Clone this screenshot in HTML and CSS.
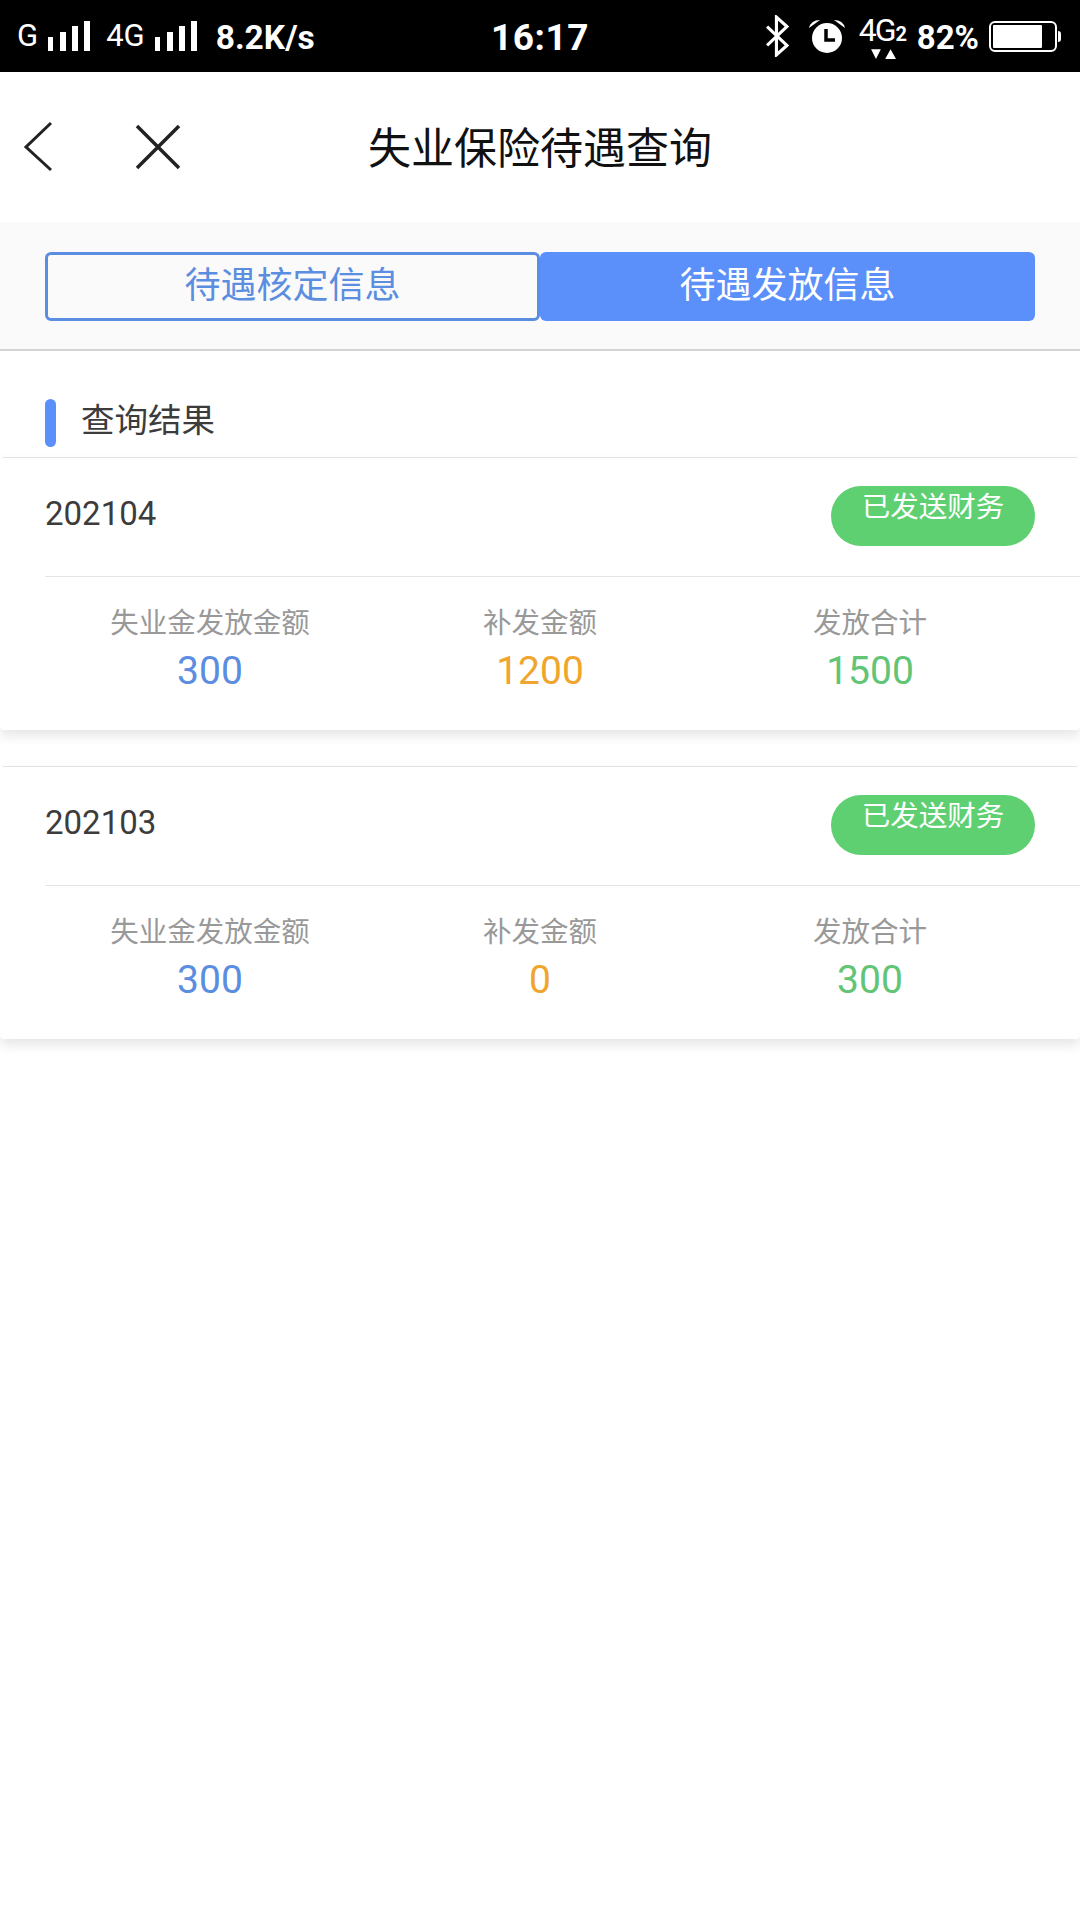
FILE: index.html
```html
<!DOCTYPE html>
<html lang="zh-CN">
<head>
    <meta charset="UTF-8">
    <meta name="viewport" content="width=device-width, initial-scale=1.0">
    <title>失业保险待遇查询</title>
    <link rel="stylesheet" href="styles.css">
</head>
<body>

<div class="status-bar">
    <div class="status-left">
        <span class="net">G</span>
        <svg class="signal" width="42" height="32" viewBox="0 0 42 32" fill="#fff"><rect x="0" y="16" width="5" height="14"/><rect x="12" y="11" width="6" height="19"/><rect x="24" y="5" width="6" height="25"/><rect x="36" y="0" width="6" height="30"/></svg>
        <span class="net net-4g">4G</span>
        <svg class="signal" width="42" height="32" viewBox="0 0 42 32" fill="#fff"><rect x="0" y="16" width="5" height="14"/><rect x="12" y="11" width="6" height="19"/><rect x="24" y="5" width="6" height="25"/><rect x="36" y="0" width="6" height="30"/></svg>
        <span class="speed">8.2K/s</span>
    </div>
    <div class="status-time">16:17</div>
    <div class="status-right">
        <svg class="bt" width="23" height="42" viewBox="0 0 22 40" fill="none" stroke="#fff" stroke-width="3"><path d="M1 11 L20 29 L10 38 V2 L20 11 L1 29"/></svg>
        <svg class="alarm" width="36" height="36" viewBox="0 0 36 36"><circle cx="18" cy="20" r="15" fill="#fff"/><path d="M0 10 Q2 2 11 2 Z M36 10 Q34 2 25 2 Z" fill="#fff"/><path d="M17 11 V22 H26" fill="none" stroke="#000" stroke-width="3.500"/></svg>
        <div class="net-two">
            <span class="big">4G</span><span class="sim">2</span>
            <svg class="arrows" width="26" height="12" viewBox="0 0 24 11" fill="#fff"><path d="M1 1 H10 L5.500 10 Z M14 10 H24 L19 1 Z"/></svg>
        </div>
        <span class="percent">82%</span>
        <div class="battery"><div class="battery-level"></div></div>
        <div class="battery-tip"></div>
    </div>
</div>

<header class="nav-bar">
    <svg class="nav-icon back" width="30" height="52" viewBox="0 0 30 52" fill="none" stroke="#222" stroke-width="3"><path d="M28 2 L3 26 L28 49"/></svg>
    <svg class="nav-icon close" width="46" height="46" viewBox="0 0 46 46" fill="none" stroke="#222" stroke-width="3.500"><path d="M2 2 L44 44 M44 2 L2 44"/></svg>
    <h1>失业保险待遇查询</h1>
</header>

<div class="tabs">
    <div class="tab">待遇核定信息</div>
    <div class="tab active">待遇发放信息</div>
</div>

<div class="section-title">
    <span class="mark"></span>
    <span>查询结果</span>
</div>

<main>
    <section class="card">
        <div class="card-head">
            <span class="month">202104</span>
            <span class="pill">已发送财务</span>
        </div>
        <div class="stats">
            <div class="stat"><span class="label">失业金发放金额</span><span class="value blue">300</span></div>
            <div class="stat"><span class="label">补发金额</span><span class="value orange">1200</span></div>
            <div class="stat"><span class="label">发放合计</span><span class="value green">1500</span></div>
        </div>
    </section>
    <section class="card">
        <div class="card-head">
            <span class="month">202103</span>
            <span class="pill">已发送财务</span>
        </div>
        <div class="stats">
            <div class="stat"><span class="label">失业金发放金额</span><span class="value blue">300</span></div>
            <div class="stat"><span class="label">补发金额</span><span class="value orange">0</span></div>
            <div class="stat"><span class="label">发放合计</span><span class="value green">300</span></div>
        </div>
    </section>
</main>

</body>
</html>
```

FILE: styles.css
```css
* {
    box-sizing: border-box;
}
body {
    font-family: "Noto Sans CJK SC", Roboto, sans-serif;
    margin: 0;
    padding: 0;
    background: #fff;
    min-height: 1920px;
}

/* Status bar */
.status-bar {
    height: 72px;
    background: #000;
    color: #fff;
    display: grid;
    grid-template-columns: 1fr auto 1fr;
    align-items: center;
    font-family: Roboto, sans-serif;
}
.status-left {
    display: flex;
    align-items: center;
    padding-left: 17px;
}
.net {
    font-size: 31px;
    line-height: 32px;
}
.net-4g {
    margin-left: 16px;
}
.signal {
    margin-left: 10px;
    margin-top: 1px;
}
.speed {
    font-size: 33.500px;
    font-weight: 700;
    margin-left: 19px;
    margin-top: 2px;
}
.status-time {
    font-size: 37px;
    font-weight: 700;
    letter-spacing: 0.5px;
    margin-top: 3px;
}
.status-right {
    display: flex;
    align-items: center;
    justify-content: flex-end;
    padding-right: 19px;
}
.bt {
    margin-right: 20px;
}
.alarm {
    margin-right: 14px;
}
.net-two {
    width: 50px;
    height: 48px;
    position: relative;
    margin-right: 8px;
    line-height: 36px;
    white-space: nowrap;
}
.net-two .big {
    font-size: 32px;
    letter-spacing: -2px;
}
.net-two .sim {
    font-size: 20px;
    font-weight: 700;
    margin-left: 1px;
}
.arrows {
    position: absolute;
    left: 11px;
    top: 36px;
}
.percent {
    font-size: 33px;
    font-weight: 700;
    margin-right: 10px;
    margin-top: 2px;
}
.battery {
    width: 68px;
    height: 31px;
    border: 2px solid #fff;
    border-radius: 6px;
    padding: 2px;
}
.battery-level {
    width: 82%;
    height: 100%;
    background: #fff;
    border-radius: 1px;
}
.battery-tip {
    width: 3px;
    height: 11px;
    background: #fff;
    margin-left: 1px;
    border-radius: 0 3px 3px 0;
}

/* Title bar */
.nav-bar {
    height: 150px;
    display: flex;
    align-items: center;
    justify-content: center;
    position: relative;
    background: #fff;
    padding-bottom: 4px;
}
.nav-bar h1 {
    margin: 0;
    font-size: 43px;
    font-weight: 400;
    color: #111;
}
.nav-icon {
    position: absolute;
}
.back {
    left: 23px;
    top: 49px;
}
.close {
    left: 135px;
    top: 52px;
}

/* Tabs */
.tabs {
    height: 129px;
    background: #fafafa;
    border-bottom: 2px solid #d4d4d4;
    padding: 30px 45px 0;
    display: flex;
}
.tab {
    width: 50%;
    height: 69px;
    display: flex;
    align-items: center;
    justify-content: center;
    font-size: 36px;
    border: 3px solid #5b8de0;
    border-radius: 6px;
    color: #5b8de0;
    padding-bottom: 10px;
}
.tab.active {
    background: #5b8ffa;
    border: none;
    color: #fff;
}

/* Section heading */
.section-title {
    height: 106px;
    padding: 48px 0 0 45px;
    display: flex;
    align-items: flex-start;
    gap: 25px;
    font-size: 33.500px;
    line-height: 38px;
    color: #3c3c3c;
}
.mark {
    width: 11px;
    height: 48px;
    border-radius: 6px;
    background: #5b8ffa;
}

/* Result cards */
.card {
    height: 273px;
    margin-bottom: 36px;
    background: #fff;
    box-shadow: 0 6px 12px rgba(0, 0, 0, 0.1);
    border-radius: 4px;
}
.card::before {
    content: "";
    display: block;
    height: 1px;
    margin: 0 3px;
    background: #e2e2e2;
}
.card-head {
    height: 119px;
    margin-left: 45px;
    padding: 28px 45px 0 0;
    display: flex;
    justify-content: space-between;
    align-items: flex-start;
    border-bottom: 1px solid #e4e4e4;
}
.month {
    font-family: Roboto, sans-serif;
    font-size: 33px;
    line-height: 55px;
    color: #3c3c3c;
}
.pill {
    width: 204px;
    height: 60px;
    border-radius: 30px;
    background: #5fd072;
    color: #fff;
    font-size: 28.500px;
    line-height: 38px;
    text-align: center;
}
.stats {
    display: flex;
    padding: 24px 45px 0;
}
.stat {
    flex: 1;
    display: flex;
    flex-direction: column;
    align-items: center;
}
.label {
    font-size: 28.500px;
    line-height: 40px;
    color: #999;
}
.value {
    font-family: Roboto, sans-serif;
    font-size: 39px;
    line-height: 48px;
    margin-top: 6px;
}
.blue {
    color: #5b8de0;
}
.orange {
    color: #f0a52c;
}
.green {
    color: #62c475;
}
```
